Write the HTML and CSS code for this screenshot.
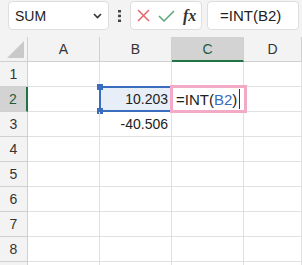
FILE: index.html
```html
<!DOCTYPE html>
<html lang="ja">

<head>
    <meta charset="UTF-8">
    <title>INT</title>
    <link rel="stylesheet" href="styles.css">
</head>

<body>
    <!-- 数式バー -->
    <div class="toolbar">
        <div class="namebox">
            <span>SUM</span>
            <svg class="chevron" width="9" height="6" viewBox="0 0 9 6">
                <path d="M1 1 L4.5 4.5 L8 1" fill="none" stroke="#333" stroke-width="1.6"/>
            </svg>
        </div>
        <div class="dots">
            <svg width="3" height="12" viewBox="0 0 3 12">
                <rect x="0" y="0" width="3" height="2.5" fill="#444"/>
                <rect x="0" y="4.7" width="3" height="2.5" fill="#444"/>
                <rect x="0" y="9.5" width="3" height="2.5" fill="#444"/>
            </svg>
        </div>
        <div class="fnbox">
            <svg class="cancel" width="13" height="13" viewBox="0 0 13 13">
                <path d="M1 1 L12 12 M12 1 L1 12" stroke="#e0686a" stroke-width="1.5"/>
            </svg>
            <svg class="enter" width="17" height="12" viewBox="0 0 17 12">
                <path d="M1 6 L6 11 L16 1" fill="none" stroke="#5aa77a" stroke-width="1.5"/>
            </svg>
            <span class="fx">fx</span>
        </div>
        <div class="formula">=INT(B2)</div>
    </div>

    <!-- シート -->
    <div class="sheet">
        <div class="corner"><span class="tri"></span></div>
        <div class="colhead">A</div>
        <div class="colhead">B</div>
        <div class="colhead active">C</div>
        <div class="colhead">D</div>

        <div class="rowhead">1</div>
        <div class="cell"></div><div class="cell"></div><div class="cell"></div><div class="cell"></div>

        <div class="rowhead active">2</div>
        <div class="cell"></div>
        <div class="cell num ref">10.203<span class="refbox"><i class="h tl"></i><i class="h bl"></i></span></div>
        <div class="cell editing"><span class="edit">=INT(<span class="refname">B2</span>)<i class="caret"></i></span></div>
        <div class="cell"></div>

        <div class="rowhead">3</div>
        <div class="cell"></div><div class="cell num">-40.506</div><div class="cell"></div><div class="cell"></div>

        <div class="rowhead">4</div>
        <div class="cell"></div><div class="cell"></div><div class="cell"></div><div class="cell"></div>

        <div class="rowhead">5</div>
        <div class="cell"></div><div class="cell"></div><div class="cell"></div><div class="cell"></div>

        <div class="rowhead">6</div>
        <div class="cell"></div><div class="cell"></div><div class="cell"></div><div class="cell"></div>

        <div class="rowhead">7</div>
        <div class="cell"></div><div class="cell"></div><div class="cell"></div><div class="cell"></div>

        <div class="rowhead">8</div>
        <div class="cell"></div><div class="cell"></div><div class="cell"></div><div class="cell"></div>

        <!-- 9行目は上端だけ見える -->
        <div class="rowhead"></div>
        <div class="cell"></div><div class="cell"></div><div class="cell"></div><div class="cell"></div>
    </div>
</body>

</html>
```

FILE: styles.css
```css
* {
    box-sizing: border-box;
}

html,
body {
    margin: 0;
    height: 265px;
    overflow: hidden;
    background: #fff;
    font-family: "Liberation Sans", "Noto Sans CJK JP", sans-serif;
    color: #222;
}

.toolbar {
    display: flex;
    align-items: flex-start;
    height: 37px;
    padding: 1px 0 0 8px;
    background: #f3f3f3;
}

.namebox {
    display: flex;
    align-items: center;
    justify-content: space-between;
    width: 101px;
    height: 29px;
    padding: 0 6px 0 6px;
    font-size: 14px;
    background: #fff;
    border: 1px solid #dedede;
    border-radius: 4px;
}

.dots {
    display: flex;
    justify-content: center;
    align-items: center;
    width: 21px;
    height: 29px;
}

.fnbox {
    display: flex;
    align-items: center;
    width: 72px;
    height: 29px;
    padding-left: 6px;
    background: #fff;
    border: 1px solid #dedede;
    border-radius: 4px;
}

.enter {
    margin-left: 8px;
}

.fx {
    margin-left: 8px;
    font-family: "Liberation Serif", serif;
    font-style: italic;
    font-weight: bold;
    font-size: 16px;
    color: #333;
}

.formula {
    flex: 1;
    height: 29px;
    margin: 0 3px 0 5px;
    padding-left: 12px;
    line-height: 27px;
    font-size: 15px;
    background: #fff;
    border: 1px solid #dedede;
    border-radius: 4px;
}

.sheet {
    display: grid;
    grid-template-columns: 28px 72px 72px 72px 1fr;
    grid-auto-rows: 25px;
}

.sheet > div {
    border-right: 1px solid #e1e1e1;
    border-bottom: 1px solid #e1e1e1;
}

.corner {
    position: relative;
    background: #f3f3f3;
}

.tri {
    position: absolute;
    right: 3px;
    bottom: 3px;
    width: 0;
    height: 0;
    border-left: 17px solid transparent;
    border-bottom: 17px solid #c9c9c9;
}

.sheet > .colhead,
.sheet > .rowhead,
.sheet > .corner {
    background: #f3f3f3;
    border-color: #d0d0d0;
}

.colhead {
    text-align: center;
    line-height: 24px;
    font-size: 14px;
    color: #333;
}

.rowhead {
    text-align: center;
    line-height: 24px;
    font-size: 14px;
    color: #333;
}

.sheet > .colhead.active {
    background: #d3d3d3;
    border-bottom: 2px solid #217346;
    color: #245b40;
}

.sheet > .rowhead.active {
    background: #d3d3d3;
    border-right: 2px solid #217346;
    color: #245b40;
}

.cell {
    position: relative;
    font-size: 14px;
    line-height: 24px;
}

.num {
    text-align: right;
    padding-right: 3px;
}

.ref {
    background: #e8eef8;
}

.refbox {
    position: absolute;
    left: -1px;
    top: -1px;
    right: -1px;
    bottom: -1px;
    border: 2px solid #3a6cc0;
}

.h {
    position: absolute;
    width: 6px;
    height: 6px;
    background: #3a6cc0;
}

.tl {
    left: -4px;
    top: -4px;
}

.bl {
    left: -4px;
    bottom: -4px;
}

.editing {
    z-index: 2;
}

.edit {
    position: absolute;
    left: -2px;
    top: -2px;
    right: -4px;
    bottom: -2px;
    padding-left: 3px;
    font-size: 15px;
    line-height: 23px;
    background: #fff;
    border: 3px solid #f2aac6;
}

.refname {
    color: #3a6cc0;
}

.caret {
    display: inline-block;
    width: 1px;
    height: 20px;
    margin-left: 2px;
    vertical-align: -4px;
    background: #333;
}
```
